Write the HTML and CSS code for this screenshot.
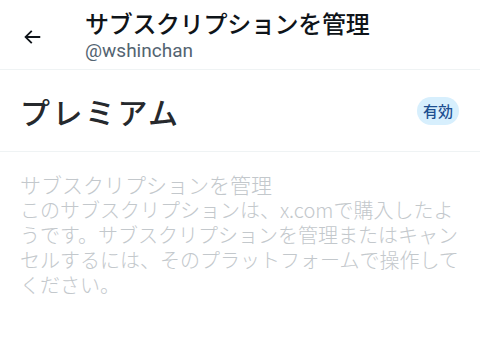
FILE: index.html
```html
<!DOCTYPE html>
<html lang="ja">
<head>
    <meta charset="UTF-8">
    <meta name="viewport" content="width=device-width, initial-scale=1.0">
    <title>サブスクリプションを管理</title>
    <link rel="stylesheet" href="styles.css">
</head>
<body>
    <div class="page">
        <header class="topbar">
            <button class="back" aria-label="戻る">
                <svg viewBox="0 0 24 24" width="22" height="22">
                    <path d="M7.414 13l5.043 5.04-1.414 1.42L3.586 12l7.457-7.46 1.414 1.42L7.414 11H21v2H7.414z" fill="#0f1419"/>
                </svg>
            </button>
            <div class="titles">
                <h1>サブスクリプションを管理</h1>
                <div class="handle">@wshinchan</div>
            </div>
        </header>

        <section class="plan">
            <h2>プレミアム</h2>
            <span class="badge">有効</span>
        </section>

        <section class="manage">
            <h3>サブスクリプションを管理</h3>
            <p>このサブスクリプションは、x.comで購入したようです。サブスクリプションを管理またはキャンセルするには、そのプラットフォームで操作してください。</p>
        </section>
    </div>
</body>
</html>
```

FILE: styles.css
```css
* {
    margin: 0;
    padding: 0;
    box-sizing: border-box;
}

body {
    font-family: Roboto, "Noto Sans CJK JP", sans-serif;
    background: #fff;
    color: #0f1419;
    width: 480px;
    height: 359px;
    overflow: hidden;
}

.topbar {
    display: flex;
    align-items: center;
    height: 70px;
    padding: 0 20px;
    border-bottom: 1px solid #eff3f4;
}

.back {
    background: none;
    border: none;
    width: 24px;
    height: 24px;
    display: flex;
    align-items: center;
    justify-content: center;
    margin-right: 41px;
    margin-top: 4px;
}

.titles h1 {
    font-family: "Noto Sans CJK JP", sans-serif;
    font-size: 24px;
    font-weight: 500;
    line-height: 30px;
    letter-spacing: -0.3px;
}

.handle {
    font-family: Roboto, sans-serif;
    font-size: 19px;
    color: #536471;
    line-height: 22px;
    margin-top: 2px;
}

.plan {
    display: flex;
    align-items: center;
    justify-content: space-between;
    height: 82px;
    padding: 0 21px 0 20px;
    border-bottom: 1px solid #eff3f4;
}

.plan h2 {
    font-family: "Noto Sans CJK JP", sans-serif;
    font-size: 30px;
    font-weight: 500;
    color: #26292d;
    letter-spacing: 2.5px;
}

.badge {
    font-family: "Noto Sans CJK JP", sans-serif;
    background: #d7effd;
    color: #1d4f91;
    font-size: 15px;
    font-weight: 500;
    line-height: 20px;
    padding: 4px 6px;
    border-radius: 14px;
}

.manage {
    padding: 20px 20px;
    color: #c3c8cc;
    font-family: "Noto Sans CJK JP", sans-serif;
    font-weight: 300;
}

.manage h3 {
    font-size: 21px;
    font-weight: 300;
    line-height: 25px;
}

.manage p {
    font-size: 20px;
    line-height: 25px;
}
```
